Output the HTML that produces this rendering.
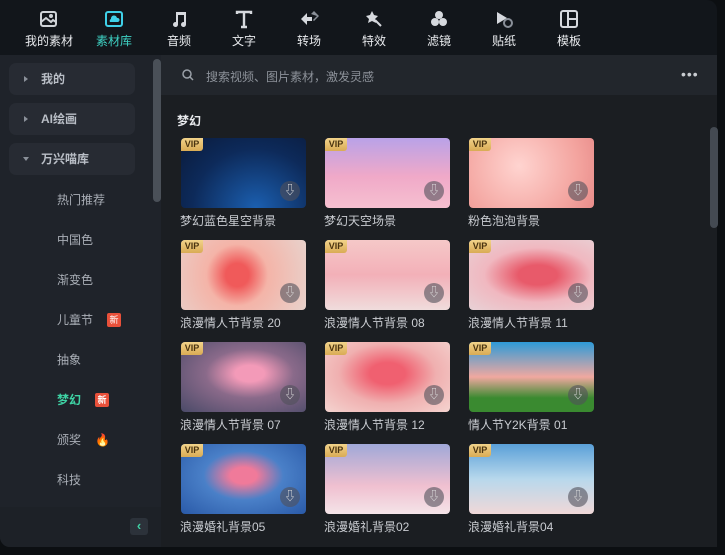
<!DOCTYPE html>
<html><head><meta charset="utf-8"><style>
*{margin:0;padding:0;box-sizing:border-box}
body{width:725px;height:555px;background:#0c0f12;font-family:"Liberation Sans","Noto Sans CJK SC",sans-serif;overflow:hidden;position:relative;color:#d0d3d8}
.top{position:absolute;left:0;top:0;width:717px;height:55px;background:#12161b;border-radius:0 10px 0 0}
.tab{position:absolute;top:8px;width:60px;text-align:center;font-size:12px;color:#e8eaed}
.tab svg{display:block;margin:0 auto 2px;width:22px;height:22px}
.side{position:absolute;left:0;top:55px;width:161px;height:492px;background:#1f232a;border-radius:0 0 0 10px}
.grp{position:absolute;left:9px;width:126px;height:32px;background:#272b33;border-radius:7px;font-size:12px;font-weight:bold;color:#b9bec6;line-height:32px;padding-left:32px}
.grp i{position:absolute;left:15px;top:13px;width:0;height:0;border-left:4px solid #8a9099;border-top:3px solid transparent;border-bottom:3px solid transparent}
.grp i.d{border-top:4px solid #8a9099;border-left:3px solid transparent;border-right:3px solid transparent;border-bottom:0;left:14px;top:14px}
.sub{position:absolute;left:57px;font-size:12px;color:#a9aeb6}
.new{display:inline-block;margin-left:14px;width:14px;height:14px;background:#e8503a;color:#fff;font-size:9px;line-height:14px;text-align:center;border-radius:2px;vertical-align:1px}
.main{position:absolute;left:161px;top:55px;width:556px;height:492px;background:#1b1e22}
.search{position:absolute;left:0;top:0;width:556px;height:40px;background:#22262c}
.card{position:absolute;width:125px;height:70px;border-radius:4px;overflow:hidden}
.vip{position:absolute;left:0;top:0;width:22px;height:13px;background:linear-gradient(#f2d38a,#d9ab55);color:#4a3410;font-size:9px;font-weight:bold;text-align:center;line-height:13px;border-radius:0 0 3px 0}
.dl{position:absolute;right:6px;bottom:7px;width:20px;height:20px;border-radius:50%;background:rgba(80,80,90,.6)}
.dl:after{content:"⇩";position:absolute;left:0;top:1px;width:20px;text-align:center;color:#ddd;font-size:12px;line-height:17px}
.lbl{position:absolute;font-size:12px;color:#c9ccd1;white-space:nowrap}
</style></head><body>
<div class="top">
<div class="tab" style="left:19px"><svg viewBox="0 0 22 22" fill="none" stroke="#cfd3d8" stroke-width="2"><rect x="3" y="4" width="15" height="14" rx="2"/><path d="M3 14l5-4 5 4 2-2 3 2" /><circle cx="13" cy="8" r="1" fill="#cfd3d8"/></svg>我的素材</div>
<div class="tab" style="left:84px;color:#3ed2c4"><svg viewBox="0 0 22 22" fill="none" stroke="#3fd0e8" stroke-width="2"><rect x="3" y="4" width="16" height="14" rx="2"/><path d="M7 14h8a2 2 0 0 0-1-4 3 3 0 0 0-6 1 2 2 0 0 0-1 3z" fill="#3fd0e8" stroke="none"/></svg>素材库</div>
<div class="tab" style="left:149px"><svg viewBox="0 0 22 22" fill="#d6d9de"><path d="M8 4h10v12.5a2.5 2.5 0 1 1-2-2.4V7H10v9.5a2.5 2.5 0 1 1-2-2.4z"/></svg>音频</div>
<div class="tab" style="left:214px"><svg viewBox="0 0 22 22" fill="none" stroke="#d6d9de" stroke-width="2.4"><path d="M4 6V4h14v2M11 4v15M8 19h6"/></svg>文字</div>
<div class="tab" style="left:279px"><svg viewBox="0 0 22 22" fill="#d6d9de"><path d="M3 11l6-6v4h5v4H9v4z"/><path d="M13 6l3-3 5 5-5 5-1-1 4-4z" fill="#8a9099"/></svg>转场</div>
<div class="tab" style="left:344px"><svg viewBox="0 0 22 22" fill="#d6d9de"><path d="M9 3l2 4 4 1-3 3 1 4-4-2-4 2 1-4-3-3 4-1z"/><path d="M12 12l6 6" stroke="#d6d9de" stroke-width="2"/></svg>特效</div>
<div class="tab" style="left:409px"><svg viewBox="0 0 22 22" fill="#d6d9de"><circle cx="11" cy="7" r="4"/><circle cx="7" cy="14" r="4"/><circle cx="15" cy="14" r="4"/></svg>滤镜</div>
<div class="tab" style="left:474px"><svg viewBox="0 0 22 22"><path d="M4 4l10 6-10 6z" fill="#d6d9de"/><circle cx="15" cy="15" r="4" fill="none" stroke="#8a9099" stroke-width="2"/></svg>贴纸</div>
<div class="tab" style="left:539px"><svg viewBox="0 0 22 22" fill="none" stroke="#d6d9de" stroke-width="2"><rect x="3" y="3" width="16" height="16" rx="2"/><path d="M10 3v16M10 11h9"/></svg>模板</div>
</div>
<div class="side">
<div class="grp" style="top:8px"><i></i>我的</div>
<div class="grp" style="top:48px"><i></i>AI绘画</div>
<div class="grp" style="top:88px"><i class="d"></i>万兴喵库</div>
<div class="sub" style="top:136px">热门推荐</div>
<div class="sub" style="top:176px">中国色</div>
<div class="sub" style="top:216px">渐变色</div>
<div class="sub" style="top:256px">儿童节<span class="new">新</span></div>
<div class="sub" style="top:296px">抽象</div>
<div class="sub" style="top:336px;color:#3ed2a4;font-weight:bold">梦幻<span class="new">新</span></div>
<div class="sub" style="top:376px">颁奖<span style="margin-left:14px;color:#f0503a">🔥</span></div>
<div class="sub" style="top:416px">科技</div>
<div style="position:absolute;left:0;top:452px;width:161px;height:40px;background:#1d2127;border-radius:0 0 0 10px"></div>
<div style="position:absolute;left:130px;top:463px;width:18px;height:17px;background:#2c323a;border-radius:3px;color:#3ed2a4;font-size:13px;font-weight:bold;text-align:center;line-height:16px">‹</div>
<div style="position:absolute;left:153px;top:4px;width:8px;height:143px;background:#4a5058;border-radius:4px"></div>
</div>
<div class="main">
<div class="search"><svg style="position:absolute;left:21px;top:14px" width="12" height="12" viewBox="0 0 12 12" fill="none" stroke="#9aa0a8" stroke-width="1.5"><circle cx="5" cy="5" r="4"/><path d="M8 8l3 3"/></svg>
<span style="position:absolute;left:45px;top:13px;font-size:12px;color:#8d929a">搜索视频、图片素材，激发灵感</span>
<span style="position:absolute;left:520px;top:11px;font-size:14px;color:#c9ccd1;letter-spacing:1px">•••</span></div>
<div style="position:absolute;left:16px;top:57px;font-size:12px;font-weight:bold;color:#e8eaed">梦幻</div>
<div style="position:absolute;left:549px;top:72px;width:8px;height:101px;background:#444a52;border-radius:4px"></div>
</div>

<div class="card" style="left:181px;top:138px;background:radial-gradient(ellipse at 60% 100%,#1b5fb0,#0d2a5a 60%,#0a1a3a)"><div class="vip">VIP</div><div class="dl"></div></div>
<div class="card" style="left:325px;top:138px;background:linear-gradient(#b9a2e8,#f0a9c8 55%,#f6c0d0)"><div class="vip">VIP</div><div class="dl"></div></div>
<div class="card" style="left:469px;top:138px;background:radial-gradient(circle at 40% 40%,#ffd4d0,#f3a39e 70%,#e88c8a)"><div class="vip">VIP</div><div class="dl"></div></div>
<div class="card" style="left:181px;top:240px;background:radial-gradient(circle at 45% 50%,#f05a5a 15%,#f4b4a8 40%,#e8d2cc)"><div class="vip">VIP</div><div class="dl"></div></div>
<div class="card" style="left:325px;top:240px;background:linear-gradient(#f5c8c8,#f3b0b8 50%,#f0dcdc)"><div class="vip">VIP</div><div class="dl"></div></div>
<div class="card" style="left:469px;top:240px;background:radial-gradient(ellipse at 55% 50%,#e85a6a 20%,#f0b8c0 55%,#e8d2d6)"><div class="vip">VIP</div><div class="dl"></div></div>
<div class="card" style="left:181px;top:342px;background:radial-gradient(ellipse at 55% 45%,#f39ab8 15%,#8a6a8a 45%,#4a4a68)"><div class="vip">VIP</div><div class="dl"></div></div>
<div class="card" style="left:325px;top:342px;background:radial-gradient(ellipse at 50% 45%,#f06070 20%,#f0b0b0 55%,#f4d4d0)"><div class="vip">VIP</div><div class="dl"></div></div>
<div class="card" style="left:469px;top:342px;background:linear-gradient(#2d9ad8,#f0a8a0 50%,#3a8a30 80%)"><div class="vip">VIP</div><div class="dl"></div></div>
<div class="card" style="left:181px;top:444px;background:radial-gradient(ellipse at 50% 45%,#f07a9a 15%,#4a80c8 45%,#2a5aa8)"><div class="vip">VIP</div><div class="dl"></div></div>
<div class="card" style="left:325px;top:444px;background:linear-gradient(#a0a8d8,#f0c0d0 60%,#f4e4e8)"><div class="vip">VIP</div><div class="dl"></div></div>
<div class="card" style="left:469px;top:444px;background:linear-gradient(#5aa0d8,#b8d8ec 50%,#f0d8d8)"><div class="vip">VIP</div><div class="dl"></div></div>

<div class="lbl" style="left:180px;top:212px">梦幻蓝色星空背景</div>
<div class="lbl" style="left:324px;top:212px">梦幻天空场景</div>
<div class="lbl" style="left:468px;top:212px">粉色泡泡背景</div>
<div class="lbl" style="left:180px;top:314px">浪漫情人节背景 20</div>
<div class="lbl" style="left:324px;top:314px">浪漫情人节背景 08</div>
<div class="lbl" style="left:468px;top:314px">浪漫情人节背景 11</div>
<div class="lbl" style="left:180px;top:416px">浪漫情人节背景 07</div>
<div class="lbl" style="left:324px;top:416px">浪漫情人节背景 12</div>
<div class="lbl" style="left:468px;top:416px">情人节Y2K背景 01</div>
<div class="lbl" style="left:180px;top:518px">浪漫婚礼背景05</div>
<div class="lbl" style="left:324px;top:518px">浪漫婚礼背景02</div>
<div class="lbl" style="left:468px;top:518px">浪漫婚礼背景04</div>
</body></html>
